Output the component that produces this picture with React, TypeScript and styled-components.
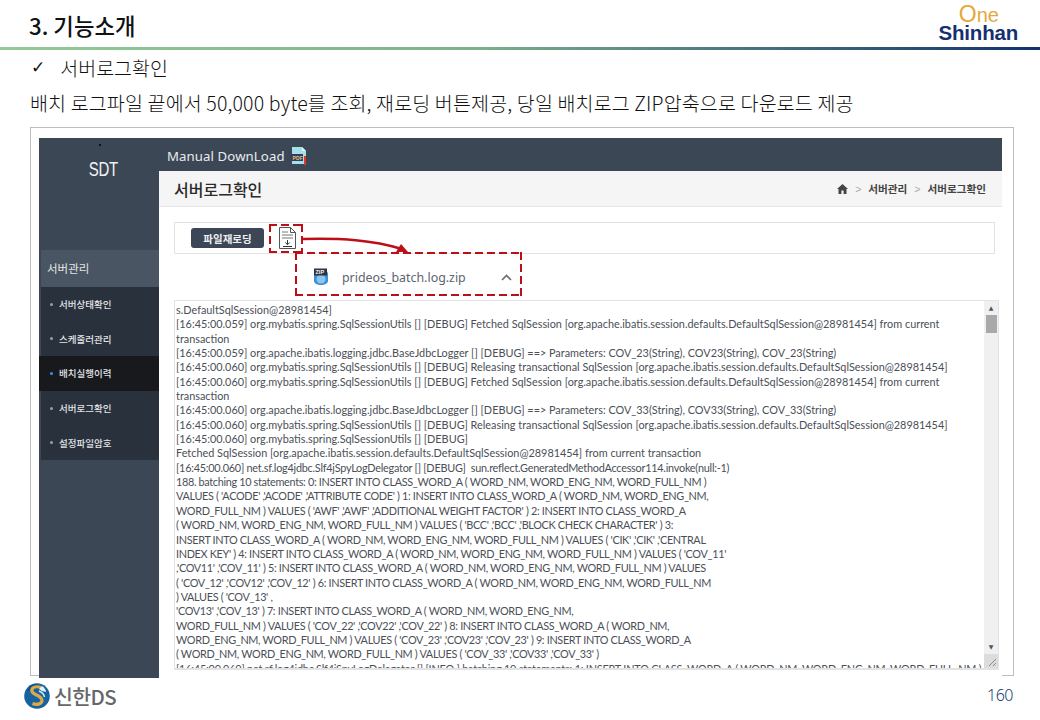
import React, { FC } from 'react';
import styled, { createGlobalStyle } from 'styled-components';

const GlobalStyle = createGlobalStyle`
    html, body {
        margin: 0;
        padding: 0;
        background: #fff;
        font-family: 'Noto Sans CJK KR', 'Noto Sans', sans-serif;
    }
`;

const Page = styled.div`
    width: 1040px;
    height: 720px;
    overflow: hidden;
    display: flex;
    flex-direction: column;
    background: #fff;
`;

const Header = styled.header`
    height: 47px;
    flex: none;
    display: flex;
    justify-content: space-between;
    align-items: flex-end;
    padding: 0 22px 0 29px;
`;

const Title = styled.h1`
    margin: 0 0 8px;
    font-size: 22.3px;
    line-height: 28px;
    font-weight: 500;
    color: #111;
`;

const Brand = styled.div`
    display: flex;
    flex-direction: column;
    align-items: flex-end;
    font-family: 'Liberation Sans', sans-serif;
    font-weight: 700;
    padding-bottom: 4px;
`;

const BrandOne = styled.span`
    font-size: 20px;
    line-height: 16px;
    font-weight: 400;
    color: #e3a93c;
    margin: 0 19px 0 0;
`;

const BrandOneInitial = styled.span`
    font-size: 23px;
`;

const BrandName = styled.span`
    font-size: 20.5px;
    line-height: 20px;
    letter-spacing: -0.2px;
    color: #14306f;
`;

const Rule = styled.div`
    height: 3px;
    flex: none;
    background: linear-gradient(90deg, #93cb97 0%, #7fb28c 45%, #4a7a80 70%, #12336b 100%);
`;

const CheckLine = styled.div`
    margin: 4px 0 0 31px;
    height: 26px;
    display: flex;
    align-items: center;
    gap: 15px;
    font-size: 19.5px;
    font-weight: 300;
    color: #111;
`;

const CheckMark = styled.span`
    font-family: 'DejaVu Sans', sans-serif;
    font-size: 17px;
    font-weight: 700;
`;

const Description = styled.p`
    margin: 9px 0 0 30px;
    height: 27px;
    font-size: 19.5px;
    font-weight: 300;
    line-height: 27px;
    letter-spacing: 0.16px;
    white-space: nowrap;
    color: #111;
`;

const Frame = styled.section`
    margin: 11px 0 0 30px;
    width: 984px;
    height: 549px;
    flex: none;
    box-sizing: border-box;
    border: 1px solid #bdbdbd;
    padding: 10px 0 0 8px;
`;

const Shot = styled.div`
    width: 963px;
    height: 540px;
    display: flex;
    background: #3c4755;
`;

const Sidebar = styled.aside`
    width: 120px;
    flex: none;
    display: flex;
    flex-direction: column;
`;

const SideLogo = styled.div`
    height: 112px;
    box-sizing: border-box;
    padding: 6px 0 0 9px;
    text-align: center;
    font-family: 'Liberation Sans', sans-serif;
    font-size: 20px;
    line-height: 24px;
    color: #f1f2f3;
`;

const SideLogoDot = styled.div`
    width: 2px;
    height: 2px;
    margin: 0 0 11px 51px;
    background: #111;
`;

const SideLogoText = styled.span`
    display: inline-block;
    letter-spacing: -0.5px;
    transform: scaleX(0.75);
`;

const MenuTitle = styled.div`
    height: 37px;
    margin-left: 2px;
    padding-left: 6px;
    background: #4a5563;
    font-size: 11.5px;
    line-height: 37px;
    color: #e4e6e8;
`;

const Menu = styled.ul`
    margin: 0 0 0 2px;
    padding: 0;
    list-style: none;
    background: #29313c;
`;

const MenuItem = styled.li<{ $active?: boolean }>`
    height: 34.6px;
    margin-left: ${(p) => (p.$active ? '-2px' : '0')};
    padding-left: ${(p) => (p.$active ? '11px' : '9px')};
    display: flex;
    align-items: center;
    gap: 6px;
    background: ${(p) => (p.$active ? '#17191d' : 'transparent')};
    font-size: 9.5px;
    font-weight: 500;
    color: #e3e5e8;
    &::before {
        content: '';
        width: 3px;
        height: 3px;
        border-radius: 50%;
        background: ${(p) => (p.$active ? '#3f8ff0' : '#9aa0a8')};
    }
`;

const Main = styled.div`
    flex: 1;
    min-width: 0;
    display: flex;
    flex-direction: column;
`;

const TopBar = styled.div`
    height: 33px;
    flex: none;
    box-sizing: border-box;
    padding: 3px 0 0 8px;
    display: flex;
    align-items: center;
    gap: 5px;
    font-family: 'Noto Sans', sans-serif;
    font-size: 13.2px;
    letter-spacing: 0.1px;
    color: #e8ebee;
`;

const Content = styled.div`
    flex: 1;
    min-height: 0;
    position: relative;
    background: #fff;
    display: flex;
    flex-direction: column;
`;

const PageHead = styled.div`
    height: 36px;
    flex: none;
    box-sizing: border-box;
    display: flex;
    align-items: center;
    justify-content: space-between;
    padding: 0 16px 0 15px;
    background: #f5f5f5;
    border-bottom: 1px solid #e6e6e6;
`;

const PageTitle = styled.h2`
    margin: 0;
    font-size: 16px;
    font-weight: 500;
    color: #2b2b2b;
`;

const Crumbs = styled.div`
    display: flex;
    align-items: center;
    gap: 7px;
    font-size: 10.6px;
    font-weight: 700;
    color: #444;
`;

const CrumbSep = styled.span`
    color: #aaa;
    font-family: 'Liberation Sans', sans-serif;
    font-weight: 400;
`;

const Toolbar = styled.div`
    margin: 15px 7px 0 15px;
    height: 32px;
    flex: none;
    box-sizing: border-box;
    border: 1px solid #e3e3e3;
    display: flex;
    align-items: center;
    gap: 14px;
    padding-left: 16px;
`;

const ReloadButton = styled.button`
    width: 73px;
    height: 20px;
    padding: 0;
    border: 0;
    border-radius: 3px;
    background: #3c4656;
    color: #eef0f2;
    font-family: inherit;
    font-size: 10.5px;
    font-weight: 700;
`;

const ZipBar = styled.div`
    height: 46px;
    flex: none;
    display: flex;
    align-items: center;
    margin-left: 154px;
    width: 199px;
    gap: 13px;
`;

const ZipName = styled.span`
    flex: 1;
    font-family: 'Noto Sans', sans-serif;
    font-size: 12.4px;
    color: #5c6470;
`;

const LogBox = styled.div`
    margin: 0 0 8px 15px;
    width: 825px;
    flex: 1;
    min-height: 0;
    box-sizing: border-box;
    border: 1px solid #e3e3e3;
    border-bottom-width: 2px;
    display: flex;
    overflow: hidden;
`;

const LogText = styled.div`
    flex: 1;
    min-width: 0;
    padding: 2px 0 0 1px;
    overflow: hidden;
    font-family: 'Lato', 'Noto Sans', sans-serif;
    font-size: 10.87px;
    line-height: 14.35px;
    color: #4a4f57;
`;

// the original's capitals run narrower than Lato's, so those lines get tracked in
const LogLine = styled.div<{ $tracking?: number }>`
    height: 14.35px;
    white-space: pre;
    letter-spacing: ${(p) => p.$tracking ?? 0}px;
`;

const Scrollbar = styled.div`
    width: 14px;
    flex: none;
    display: flex;
    flex-direction: column;
    align-items: center;
    background: #f0f0f0;
    font-size: 6px;
    color: #555;
`;

const ScrollArrow = styled.span`
    height: 14px;
    line-height: 14px;
    font-family: 'DejaVu Sans', sans-serif;
`;

const ScrollThumb = styled.div`
    width: 11px;
    height: 18px;
    background: #a9a9a9;
`;

const ScrollGap = styled.div`
    flex: 1;
`;

const Resizer = styled.svg`
    width: 14px;
    height: 14px;
    flex: none;
    background: #dcdcdc;
`;

const dash = '#bd0f18';

const DashedBox = styled.div<{ $top: number; $left: number; $width: number; $height: number }>`
    position: absolute;
    top: ${(p) => p.$top}px;
    left: ${(p) => p.$left}px;
    width: ${(p) => p.$width}px;
    height: ${(p) => p.$height}px;
    background:
        linear-gradient(90deg, ${dash} 8px, transparent 8px) 0 0 / 12px 2px repeat-x,
        linear-gradient(90deg, ${dash} 8px, transparent 8px) 0 100% / 12px 2px repeat-x,
        linear-gradient(${dash} 8px, transparent 8px) 0 0 / 2px 12px repeat-y,
        linear-gradient(${dash} 8px, transparent 8px) 100% 0 / 2px 12px repeat-y;
`;

const ArrowLayer = styled.svg`
    position: absolute;
    left: 143px;
    top: 60px;
`;

const Footer = styled.footer`
    flex: 1;
    display: flex;
    justify-content: space-between;
    align-items: flex-start;
    padding: 7px 27px 0 24px;
`;

const Company = styled.div`
    display: flex;
    align-items: center;
    gap: 4px;
    font-size: 20.5px;
    line-height: 26px;
    font-weight: 500;
    letter-spacing: -0.6px;
    color: #66676b;
`;

const PageNo = styled.div`
    margin-top: 1px;
    font-family: 'Noto Sans', sans-serif;
    font-size: 16px;
    font-weight: 300;
    letter-spacing: -0.5px;
    color: #1c3f73;
`;

const PdfIcon: FC = () => (
    <svg width="17" height="20" viewBox="0 0 17 20">
        <path d="M2 1h10l4 4v13H2z" fill="#a5dfe8" />
        <path d="M12 1l4 4h-4z" fill="#e6f6f8" />
        <rect x="1" y="8" width="12" height="7" fill="#333a66" />
        <text x="2.500" y="13.500" fontSize="5" fontWeight="700" fontFamily="Liberation Sans" fill="#e8c56a">PDF</text>
        <rect x="14" y="10" width="2" height="9" fill="#d8392b" />
    </svg>
);

const DownloadDocIcon: FC = () => (
    <svg width="19" height="24" viewBox="0 0 19 24" fill="none" stroke="#555" strokeWidth="1">
        <path d="M1.500 1.500h11l5 5v16h-16z" fill="#fff" />
        <path d="M12.500 1.500v5h5" />
        <path d="M4 6h6M4 9h11M4 12h11" stroke="#777" />
        <path d="M9.500 14v4.500M7.300 16.500l2.200 2.200 2.200-2.200" stroke="#333" />
        <path d="M5 20.500h9" stroke="#333" />
    </svg>
);

const ZipIcon: FC = () => (
    <svg width="16" height="18" viewBox="0 0 16 18">
        <path d="M1 6c0-2 1-3 3-3h8c2 0 3 1 3 3v7c0 2-3 4-7 4s-7-2-7-4z" fill="#3c8fd8" />
        <circle cx="8" cy="11" r="4.500" fill="#8cc6ee" />
        <rect x="1" y="0.500" width="13" height="7" fill="#2f3442" />
        <text x="2.500" y="6" fontSize="5.500" fontWeight="700" fontFamily="Liberation Sans" fill="#f2f2f2">ZIP</text>
    </svg>
);

const HomeIcon: FC = () => (
    <svg width="11" height="10" viewBox="0 0 11 10">
        <path d="M5.500 0L11 5H9.500v5H6.600V6.500H4.400V10H1.500V5H0z" fill="#444" />
    </svg>
);

const ChevronUp: FC = () => (
    <svg width="11" height="7" viewBox="0 0 11 7" fill="none" stroke="#6a6f76" strokeWidth="1.700">
        <path d="M1 6l4.500-4.500L10 6" />
    </svg>
);

const ShinhanEmblem: FC = () => (
    <svg width="26" height="26" viewBox="0 0 26 26">
        <circle cx="13" cy="13" r="12.800" fill="#17639f" />
        <path d="M3 8a11 11 0 0 1 9-7l4 4-7 1z" fill="#0f4f86" />
        <path d="M17 4.500C11 2.500 7 5 8 8.500c1 3.500 10 4 10 9 0 3-4.500 5-9.500 3" fill="none" stroke="#d9a94a" strokeWidth="3.200" />
        <path d="M18 3c2 1 4 4 4 6l-4-1-3-2z" fill="#e8f2f8" />
        <path d="M15 8c2.500 1 5 3 5.500 6" fill="none" stroke="#dcebf5" strokeWidth="1.500" />
    </svg>
);

const menuItems = ['서버상태확인', '스케줄러관리', '배치실행이력', '서버로그확인', '설정파일암호'];

const logLines: { text: string; tracking?: number }[] = [
    { text: 's.DefaultSqlSession@28981454]' },
    { text: '[16:45:00.059] org.mybatis.spring.SqlSessionUtils [] [DEBUG] Fetched SqlSession [org.apache.ibatis.session.defaults.DefaultSqlSession@28981454] from current' },
    { text: 'transaction' },
    { text: '[16:45:00.059] org.apache.ibatis.logging.jdbc.BaseJdbcLogger [] [DEBUG] ==> Parameters: COV_23(String), COV23(String), COV_23(String)' },
    { text: '[16:45:00.060] org.mybatis.spring.SqlSessionUtils [] [DEBUG] Releasing transactional SqlSession [org.apache.ibatis.session.defaults.DefaultSqlSession@28981454]' },
    { text: '[16:45:00.060] org.mybatis.spring.SqlSessionUtils [] [DEBUG] Fetched SqlSession [org.apache.ibatis.session.defaults.DefaultSqlSession@28981454] from current' },
    { text: 'transaction' },
    { text: '[16:45:00.060] org.apache.ibatis.logging.jdbc.BaseJdbcLogger [] [DEBUG] ==> Parameters: COV_33(String), COV33(String), COV_33(String)' },
    { text: '[16:45:00.060] org.mybatis.spring.SqlSessionUtils [] [DEBUG] Releasing transactional SqlSession [org.apache.ibatis.session.defaults.DefaultSqlSession@28981454]' },
    { text: '[16:45:00.060] org.mybatis.spring.SqlSessionUtils [] [DEBUG]' },
    { text: 'Fetched SqlSession [org.apache.ibatis.session.defaults.DefaultSqlSession@28981454] from current transaction' },
    { text: '[16:45:00.060] net.sf.log4jdbc.Slf4jSpyLogDelegator [] [DEBUG]  sun.reflect.GeneratedMethodAccessor114.invoke(null:-1)', tracking: -0.24 },
    { text: '188. batching 10 statements: 0: INSERT INTO CLASS_WORD_A ( WORD_NM, WORD_ENG_NM, WORD_FULL_NM )', tracking: -0.33 },
    { text: "VALUES ( 'ACODE' ,'ACODE' ,'ATTRIBUTE CODE' ) 1: INSERT INTO CLASS_WORD_A ( WORD_NM, WORD_ENG_NM,", tracking: -0.33 },
    { text: "WORD_FULL_NM ) VALUES ( 'AWF' ,'AWF' ,'ADDITIONAL WEIGHT FACTOR' ) 2: INSERT INTO CLASS_WORD_A", tracking: -0.33 },
    { text: "( WORD_NM, WORD_ENG_NM, WORD_FULL_NM ) VALUES ( 'BCC' ,'BCC' ,'BLOCK CHECK CHARACTER' ) 3:", tracking: -0.33 },
    { text: "INSERT INTO CLASS_WORD_A ( WORD_NM, WORD_ENG_NM, WORD_FULL_NM ) VALUES ( 'CIK' ,'CIK' ,'CENTRAL", tracking: -0.33 },
    { text: "INDEX KEY' ) 4: INSERT INTO CLASS_WORD_A ( WORD_NM, WORD_ENG_NM, WORD_FULL_NM ) VALUES ( 'COV_11'", tracking: -0.33 },
    { text: ",'COV11' ,'COV_11' ) 5: INSERT INTO CLASS_WORD_A ( WORD_NM, WORD_ENG_NM, WORD_FULL_NM ) VALUES", tracking: -0.33 },
    { text: "( 'COV_12' ,'COV12' ,'COV_12' ) 6: INSERT INTO CLASS_WORD_A ( WORD_NM, WORD_ENG_NM, WORD_FULL_NM", tracking: -0.33 },
    { text: ") VALUES ( 'COV_13' ,", tracking: -0.33 },
    { text: "'COV13' ,'COV_13' ) 7: INSERT INTO CLASS_WORD_A ( WORD_NM, WORD_ENG_NM,", tracking: -0.33 },
    { text: "WORD_FULL_NM ) VALUES ( 'COV_22' ,'COV22' ,'COV_22' ) 8: INSERT INTO CLASS_WORD_A ( WORD_NM,", tracking: -0.33 },
    { text: "WORD_ENG_NM, WORD_FULL_NM ) VALUES ( 'COV_23' ,'COV23' ,'COV_23' ) 9: INSERT INTO CLASS_WORD_A", tracking: -0.33 },
    { text: "( WORD_NM, WORD_ENG_NM, WORD_FULL_NM ) VALUES ( 'COV_33' ,'COV33' ,'COV_33' )", tracking: -0.33 },
    { text: '[16:45:00.060] net.sf.log4jdbc.Slf4jSpyLogDelegator [] [INFO ] batching 10 statements: 1: INSERT INTO CLASS_WORD_A ( WORD_NM, WORD_ENG_NM, WORD_FULL_NM )', tracking: -0.2 },
];

const App: FC = () => (
    <Page>
        <GlobalStyle />
        <Header>
            <Title>3. 기능소개</Title>
            <Brand>
                <BrandOne><BrandOneInitial>O</BrandOneInitial>ne</BrandOne>
                <BrandName>Shinhan</BrandName>
            </Brand>
        </Header>
        <Rule />
        <CheckLine>
            <CheckMark>✓</CheckMark>
            <span>서버로그확인</span>
        </CheckLine>
        <Description>배치 로그파일 끝에서 50,000 byte를 조회, 재로딩 버튼제공, 당일 배치로그 ZIP압축으로 다운로드 제공</Description>
        <Frame>
            <Shot>
                <Sidebar>
                    <SideLogo>
                        <SideLogoDot />
                        <SideLogoText>SDT</SideLogoText>
                    </SideLogo>
                    <MenuTitle>서버관리</MenuTitle>
                    <Menu>
                        {menuItems.map((item, i) => (
                            <MenuItem key={item} $active={i === 2}>{item}</MenuItem>
                        ))}
                    </Menu>
                </Sidebar>
                <Main>
                    <TopBar>
                        Manual DownLoad
                        <PdfIcon />
                    </TopBar>
                    <Content>
                        <PageHead>
                            <PageTitle>서버로그확인</PageTitle>
                            <Crumbs>
                                <HomeIcon />
                                <CrumbSep>&gt;</CrumbSep>
                                <span>서버관리</span>
                                <CrumbSep>&gt;</CrumbSep>
                                <span>서버로그확인</span>
                            </Crumbs>
                        </PageHead>
                        <Toolbar>
                            <ReloadButton>파일재로딩</ReloadButton>
                            <DownloadDocIcon />
                        </Toolbar>
                        <ZipBar>
                            <ZipIcon />
                            <ZipName>prideos_batch.log.zip</ZipName>
                            <ChevronUp />
                        </ZipBar>
                        <LogBox>
                            <LogText>
                                {logLines.map((line, i) => (
                                    <LogLine key={i} $tracking={line.tracking}>{line.text}</LogLine>
                                ))}
                            </LogText>
                            <Scrollbar>
                                <ScrollArrow>▲</ScrollArrow>
                                <ScrollThumb />
                                <ScrollGap />
                                <ScrollArrow>▼</ScrollArrow>
                                <Resizer viewBox="0 0 14 14">
                                    <path d="M5 12l7-7M9 12l3-3" stroke="#888" strokeWidth="1" />
                                </Resizer>
                            </Scrollbar>
                        </LogBox>
                        <DashedBox $top={53} $left={110} $width={34} $height={29} />
                        <DashedBox $top={81} $left={136} $width={227} $height={44} />
                        <ArrowLayer width="120" height="30" viewBox="0 0 120 30">
                            <path d="M1 8C40 7 70 9 100 18" fill="none" stroke="#bd0f18" strokeWidth="2.500" />
                            <path d="M106 21L94 21 99 13Z" fill="#bd0f18" />
                        </ArrowLayer>
                    </Content>
                </Main>
            </Shot>
        </Frame>
        <Footer>
            <Company>
                <ShinhanEmblem />
                신한DS
            </Company>
            <PageNo>160</PageNo>
        </Footer>
    </Page>
);

export default App;
